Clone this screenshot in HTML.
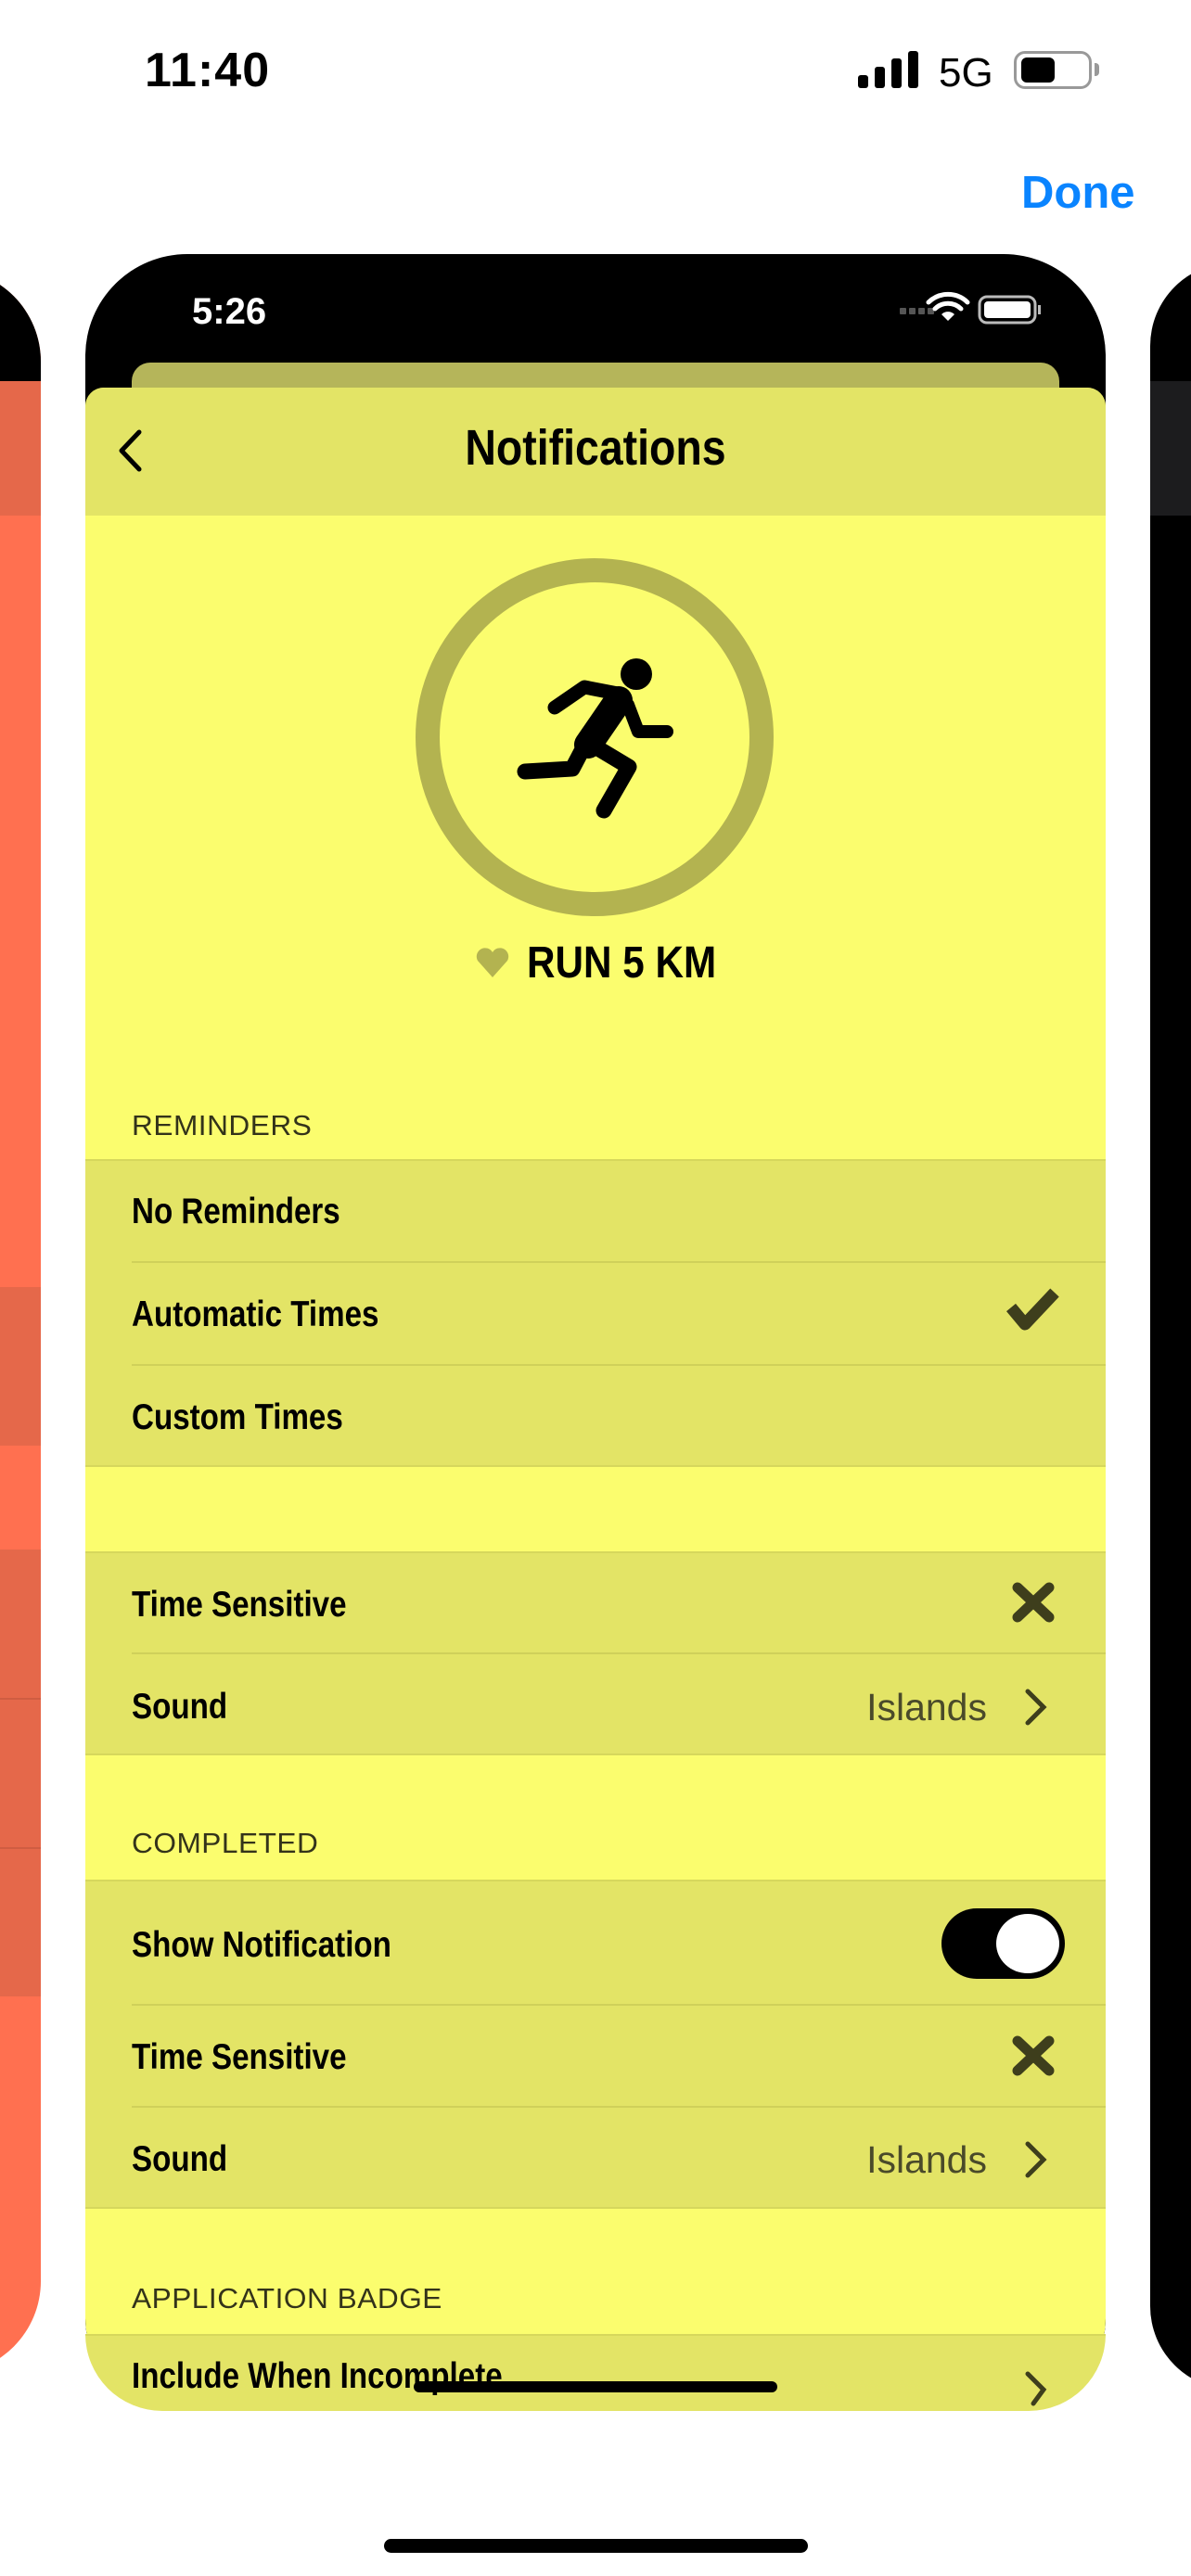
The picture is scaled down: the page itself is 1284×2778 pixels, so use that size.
<!DOCTYPE html>
<html><head><meta charset="utf-8">
<style>
*{margin:0;padding:0;box-sizing:border-box}
body{width:1284px;height:2778px;background:#fff;position:relative;overflow:hidden;font-family:"Liberation Sans",sans-serif}
.a{position:absolute}
.lbl{position:absolute;left:142px;font-weight:bold;font-size:39px;color:#000;transform:scaleX(0.85);transform-origin:left center;white-space:nowrap;line-height:1}
.hdr{position:absolute;left:142px;font-size:31px;color:#33331a;letter-spacing:0.5px;line-height:1;transform:scaleX(1.02);transform-origin:left center;white-space:nowrap}
.row{position:absolute;left:92px;width:1100px;background:#e3e466}
.sep{position:absolute;left:142px;right:0;height:2px;background:#cfd05a}
.val{position:absolute;font-size:41px;color:#4a4a2a;line-height:1;transform:scaleX(1.0);transform-origin:right center}
</style></head><body>
<div class="a" style="left:156px;top:46px;font-size:52px;font-weight:bold;letter-spacing:1px">11:40</div>
<div class="a" style="left:925px;top:81px;width:11px;height:14px;background:#000;border-radius:3px"></div>
<div class="a" style="left:943px;top:72px;width:11px;height:23px;background:#000;border-radius:3px"></div>
<div class="a" style="left:961px;top:63px;width:11px;height:32px;background:#000;border-radius:3px"></div>
<div class="a" style="left:979px;top:55px;width:11px;height:40px;background:#000;border-radius:3px"></div>
<div class="a" style="left:1012px;top:54px;font-size:44px">5G</div>
<div class="a" style="left:1093px;top:55px;width:84px;height:41px;border:3px solid #999;border-radius:12px"></div>
<div class="a" style="left:1101px;top:62px;width:36px;height:27px;background:#000;border-radius:6px"></div>
<div class="a" style="left:1180px;top:68px;width:5px;height:14px;background:#999;border-radius:0 4px 4px 0"></div>
<div class="a" style="left:1101px;top:180px;font-size:49px;font-weight:bold;color:#0a84ff">Done</div>

<div class="a" style="left:-100px;top:290px;width:144px;height:2270px;border-radius:0 100px 100px 0;overflow:hidden;background:#ff7050">
  <div class="a" style="left:0;top:0;width:144px;height:121px;background:#000"></div>
  <div class="a" style="left:0;top:121px;width:144px;height:145px;background:#e5684a"></div>
  <div class="a" style="left:0;top:1098px;width:144px;height:171px;background:#e5684a"></div>
  <div class="a" style="left:0;top:1381px;width:144px;height:482px;background:#e5684a"></div>
  <div class="a" style="left:0;top:1541px;width:144px;height:2px;background:#cf5d42"></div>
  <div class="a" style="left:0;top:1702px;width:144px;height:2px;background:#cf5d42"></div>
</div>
<div class="a" style="left:1240px;top:283px;width:150px;height:2294px;border-radius:90px 0 0 90px;background:#000;overflow:hidden">
  <div class="a" style="left:0;top:128px;width:150px;height:145px;background:#1c1c1e"></div>
</div>

<div class="a" style="left:92px;top:274px;width:1100px;height:2326px;background:#000;border-radius:110px 110px 100px 100px;overflow:hidden">
  <div class="a" style="left:115px;top:40px;font-size:40px;font-weight:bold;color:#fff">5:26</div>
  <div class="a" style="left:50px;top:117px;width:1000px;height:60px;background:#b5b55a;border-radius:20px 20px 0 0"></div>
  <div class="a" style="left:0;top:144px;width:1100px;height:2182px;background:#fbfd6e;border-radius:20px 20px 100px 100px;overflow:hidden">
    <div class="a" style="left:0;top:0;width:1100px;height:138px;background:#e3e466"></div>
  </div>
</div>
<div class="a" style="left:0;top:456px;width:1284px;text-align:center;font-size:54px;font-weight:bold;transform:scaleX(0.86);line-height:1">Notifications</div>
<div class="a" style="left:568px;top:1015px;font-size:48px;font-weight:bold;line-height:1;transform:scaleX(0.88);transform-origin:left center;white-space:nowrap">RUN 5 KM</div>

<div class="hdr" style="top:1198px">REMINDERS</div>
<div class="row" style="top:1250px;height:332px;border-top:2px solid #d6d75c;border-bottom:2px solid #d6d75c"></div>
<div class="sep" style="top:1360px;left:142px;width:1050px"></div>
<div class="sep" style="top:1471px;left:142px;width:1050px"></div>
<div class="lbl" style="top:1287px">No Reminders</div>
<div class="lbl" style="top:1398px">Automatic Times</div>
<div class="lbl" style="top:1509px">Custom Times</div>

<div class="row" style="top:1673px;height:220px;border-top:2px solid #d6d75c;border-bottom:2px solid #d6d75c"></div>
<div class="sep" style="top:1782px;width:1050px"></div>
<div class="lbl" style="top:1711px">Time Sensitive</div>
<div class="lbl" style="top:1821px">Sound</div>
<div class="val" style="right:220px;top:1821px">Islands</div>

<div class="hdr" style="top:1972px">COMPLETED</div>
<div class="row" style="top:2027px;height:355px;border-top:2px solid #d6d75c;border-bottom:2px solid #d6d75c"></div>
<div class="sep" style="top:2161px;width:1050px"></div>
<div class="sep" style="top:2271px;width:1050px"></div>
<div class="lbl" style="top:2078px">Show Notification</div>
<div class="lbl" style="top:2199px">Time Sensitive</div>
<div class="lbl" style="top:2309px">Sound</div>
<div class="val" style="right:220px;top:2309px">Islands</div>
<div class="a" style="left:1015px;top:2058px;width:133px;height:76px;background:#000;border-radius:38px"></div>
<div class="a" style="left:1074px;top:2064px;width:68px;height:64px;background:#fff;border-radius:50%"></div>

<div class="hdr" style="top:2463px">APPLICATION BADGE</div>
<div class="a" style="left:92px;top:2517px;width:1100px;height:83px;background:#e3e466;border-top:2px solid #d6d75c;border-radius:0 0 100px 100px;overflow:hidden">
  <div class="lbl" style="left:50px;top:24px">Include When Incomplete</div>
</div>

<svg class="a" style="left:0;top:0" width="1284" height="2778" viewBox="0 0 1284 2778">
  <g fill="#555"><rect x="970" y="332" width="7" height="7" rx="1"/><rect x="980" y="332" width="7" height="7" rx="1"/><rect x="990" y="332" width="7" height="7" rx="1"/><rect x="1000" y="332" width="7" height="7" rx="1"/></g>
  <path d="M1001 326 a30 30 0 0 1 42 0 M1008 333 a20 20 0 0 1 28 0" stroke="#fff" stroke-width="5" fill="none" stroke-linecap="round"/>
  <path d="M1015 339 L1022 346 L1029 339 a10 10 0 0 0 -14 0z" fill="#fff"/>
  <rect x="1056" y="320" width="60" height="28" rx="8" fill="none" stroke="#bbb" stroke-width="3"/>
  <rect x="1061" y="325" width="50" height="18" rx="4" fill="#fff"/>
  <rect x="1119" y="329" width="3" height="10" fill="#bbb"/>
  <path d="M150 466 L131 486 L150 506" stroke="#000" stroke-width="5" fill="none" stroke-linecap="round" stroke-linejoin="round"/>
  <circle cx="641" cy="795" r="180" fill="none" stroke="#b3b350" stroke-width="26"/>
  <g stroke="#000" stroke-linecap="round" stroke-linejoin="round" fill="none">
    <circle cx="686" cy="727" r="17" fill="#000" stroke="none"/>
    <path d="M598 763 L630 741 L666 748" stroke-width="15"/>
    <path d="M667 755 L634 803" stroke-width="30"/>
    <path d="M677 760 L688 789 L719 789" stroke-width="14"/>
    <path d="M633 800 L678 827 L651 874" stroke-width="17"/>
    <path d="M627 810 L617 829 L566 832" stroke-width="17"/>
  </g>
  <path d="M531 1054 L515 1036 a9 9 0 0 1 16 -9 a9 9 0 0 1 16 9 z" fill="#b3b350"/>
  <path d="M1090 1410 L1105 1428 L1137 1394" stroke="#3e3e1c" stroke-width="13" fill="none" stroke-linejoin="round"/>
  <path d="M1097 1712 L1131 1744 M1131 1712 L1097 1744" stroke="#3e3e1c" stroke-width="11" stroke-linecap="round"/>
  <path d="M1097 2201 L1131 2233 M1131 2201 L1097 2233" stroke="#3e3e1c" stroke-width="11" stroke-linecap="round"/>
  <path d="M1108 1824 L1125 1841 L1108 1858" stroke="#3e3e1c" stroke-width="5" fill="none" stroke-linecap="round"/>
  <path d="M1108 2312 L1125 2329 L1108 2346" stroke="#3e3e1c" stroke-width="5" fill="none" stroke-linecap="round"/>
  <path d="M1108 2560 L1125 2577 L1114 2592" stroke="#3e3e1c" stroke-width="5" fill="none" stroke-linecap="round"/>
  <rect x="446" y="2568" width="392" height="12" rx="6" fill="#000"/>
  <rect x="414" y="2738" width="457" height="15" rx="7.5" fill="#000"/>
</svg>
</body></html>
